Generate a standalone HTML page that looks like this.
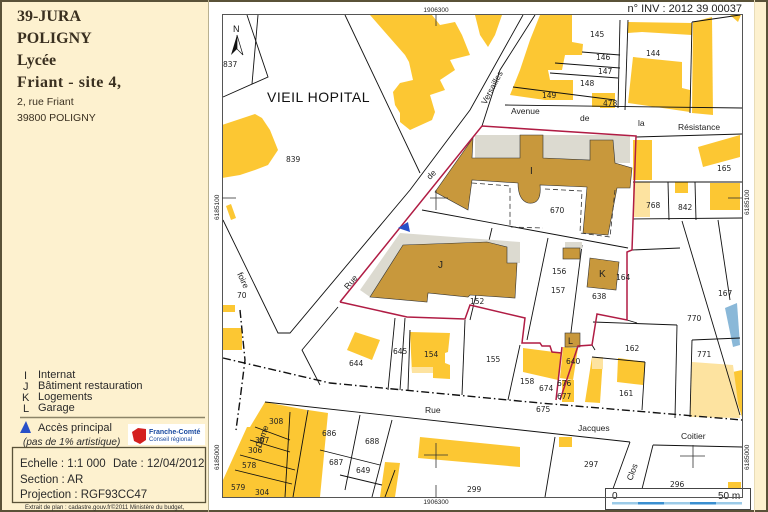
<!DOCTYPE html>
<html><head><meta charset="utf-8"><style>
body{margin:0;width:768px;height:512px;overflow:hidden;background:#fdf1cf;font-family:"Liberation Sans",sans-serif;}
.p{position:absolute;left:0;top:0}
</style></head><body>
<svg class="p" width="768" height="512" viewBox="0 0 768 512" font-family="Liberation Sans, sans-serif">
<rect x="0" y="0" width="768" height="512" fill="#fdf1cf"/>
<rect x="209" y="0" width="545" height="510" fill="#fff"/>
<rect x="1" y="1" width="766" height="510" fill="none" stroke="#5a5238" stroke-width="2"/>
<line x1="208.5" y1="0" x2="208.5" y2="512" stroke="#b8b090"/>
<line x1="754.5" y1="0" x2="754.5" y2="512" stroke="#e8dcb8"/>

<!-- left panel text -->
<g font-family="Liberation Serif, serif" font-weight="bold" font-size="16" fill="#3a3020">
<text x="17" y="21">39-JURA</text>
<text x="17" y="43">POLIGNY</text>
<text x="17" y="65">Lycée</text>
<text x="17" y="87" textLength="104">Friant - site 4,</text>
</g>
<text x="17" y="105" font-size="10.5" fill="#3a3020">2, rue Friant</text>
<text x="17" y="121" font-size="10.5" fill="#3a3020">39800 POLIGNY</text>
<g font-size="11" fill="#2a2a2a">
<text x="24" y="379">I</text><text x="38" y="378">Internat</text>
<text x="23" y="390">J</text><text x="38" y="389">Bâtiment restauration</text>
<text x="22" y="401">K</text><text x="38" y="400">Logements</text>
<text x="23" y="412">L</text><text x="38" y="411">Garage</text>
</g>
<line x1="20" y1="417.5" x2="205" y2="417.5" stroke="#8c8468" stroke-width="1.5"/>
<polygon points="20,433 26,421 31,433" fill="#2850c8"/>
<text x="38" y="431" font-size="11" fill="#2a2a2a">Accès principal</text>
<text x="23" y="445" font-size="10" font-style="italic" fill="#2a2a2a">(pas de 1% artistique)</text>
<rect x="128" y="424" width="77" height="21" fill="#fff"/>
<path d="M132,432 L138,428 L146,429 L146,440 L140,444 L134,441 Z" fill="#d42020"/>
<text x="149" y="434" font-size="7" font-weight="bold" fill="#1a4aa0">Franche-Comté</text>
<text x="149" y="441" font-size="6" fill="#1a4aa0">Conseil régional</text>
<rect x="12.5" y="447.5" width="193" height="55" fill="none" stroke="#5a5238" stroke-width="1.3"/>
<g font-size="11.5" fill="#2a2a2a">
<text x="20" y="467">Echelle : 1:1 000</text><text x="113" y="467">Date : 12/04/2012</text>
<text x="20" y="483">Section : AR</text>
<text x="20" y="498">Projection : RGF93CC47</text>
</g>
<text x="25" y="509" font-size="6" fill="#2a2a2a">Extrait de plan : cadastre.gouv.fr©2011 Ministère du budget,</text>

<!-- map -->
<text x="742" y="12" font-size="11" text-anchor="end" fill="#222">n° INV : 2012 39 00037</text>
<text x="436" y="12" font-size="6.5" text-anchor="middle" fill="#222">1906300</text>
<text x="436" y="504" font-size="6.5" text-anchor="middle" fill="#222">1906300</text>
<text transform="translate(219,220) rotate(-90)" font-size="6.5" fill="#222">6185100</text>
<text transform="translate(219,470) rotate(-90)" font-size="6.5" fill="#222">6185000</text>
<text transform="translate(749,215) rotate(-90)" font-size="6.5" fill="#222">6185100</text>
<text transform="translate(749,470) rotate(-90)" font-size="6.5" fill="#222">6185000</text>

<g fill="#fcc733">
<polygon points="370,15 432,15 440,25 455,22 462,35 470,55 450,60 455,70 440,80 445,90 430,95 435,112 432,120 410,130 400,122 400,113 395,105 393,92 400,83 413,80 409,62 405,55"/>
<polygon points="475,15 502,15 495,35 488,47 480,35"/>
<polygon points="222,125 237,120 255,114 262,118 270,130 278,150 268,165 255,170 240,175 222,178"/>
<polygon points="226,206 231,204 236,218 231,220"/>
<polygon points="540,15 572,15 572,42 583,44 582,55 565,55 562,70 548,70 550,80 573,80 573,100 545,100 510,95 520,70 530,40"/>
<rect x="592" y="93" width="8" height="14"/><rect x="600" y="93" width="15" height="15"/>
<polygon points="633,57 682,62 682,88 690,90 690,112 628,103"/>
<polygon points="628,22 692,23 692,35 642,32 628,33"/>
<polygon points="693,22 712,17 713,115 692,113"/>
<polygon points="730,15 741,15 738,22"/>
<polygon points="698,147 740,135 740,157 703,167"/>
<rect x="633" y="140" width="19" height="40"/>
<rect x="675" y="182" width="13" height="11"/>
<rect x="710" y="183" width="30" height="27"/>
<polygon points="250,427 265,402 307,410 303,497 223,497 223,480 247,427"/>
<polygon points="308,410 328,413 320,497 292,497"/>
<polygon points="410,332 450,333 448,352 445,353 445,363 450,365 450,379 433,378 433,373 412,373"/>
<polygon points="355,332 380,340 372,360 347,350"/>
<rect x="223" y="328" width="19" height="22"/>
<rect x="223" y="305" width="12" height="7"/>
<polygon points="420,437 520,447 520,467 418,458"/>
<polygon points="385,462 400,463 395,497 380,497"/>
<polygon points="523,348 562,353 558,380 523,372"/>
<polygon points="563,347 578,348 573,380 560,378"/>
<polygon points="592,357 603,357 600,403 585,402"/>
<polygon points="618,358 645,362 643,385 617,382"/>
<polygon points="728,373 742,370 742,417"/>
<rect x="559" y="437" width="13" height="10"/>
<rect x="728" y="482" width="13" height="6"/>
<rect x="562" y="380" width="12" height="22"/>
</g>
<g fill="#fde3a0">
<rect x="633" y="182" width="17" height="35"/>
<polygon points="692,362 733,365 740,418 690,417"/>
<rect x="412" y="367" width="21" height="6"/>
<rect x="592" y="357" width="11" height="12"/>
</g>
<polygon points="725,308 737,303 740,345 733,347" fill="#8ab8d8"/>

<!-- lines -->
<g fill="none" stroke="#111" stroke-width="0.9">
<line x1="345" y1="15" x2="420" y2="173"/>
<polyline points="247,15 268,77 223,97"/>
<line x1="258" y1="15" x2="252" y2="84"/>
<polyline points="523,15 470,110 410,190 290,333 278,333 223,220"/>
<polyline points="535,15 500,70 482,126"/>
<polyline points="338,307 302,350 320,385"/>
<line x1="505" y1="105" x2="742" y2="108"/>
<line x1="636" y1="137" x2="742" y2="134"/>
<line x1="582" y1="52" x2="620" y2="55"/><line x1="555" y1="63" x2="620" y2="68"/>
<line x1="550" y1="73" x2="618" y2="78"/><line x1="513" y1="87" x2="615" y2="100"/>
<line x1="620" y1="20" x2="618" y2="108"/><line x1="628" y1="20" x2="625" y2="110"/>
<line x1="692" y1="22" x2="690" y2="113"/><line x1="692" y1="22" x2="740" y2="15"/>
<line x1="633" y1="182" x2="742" y2="182"/><line x1="633" y1="219" x2="742" y2="218"/>
<line x1="668" y1="182" x2="669" y2="220"/><line x1="695" y1="182" x2="696" y2="220"/>
<line x1="422" y1="210" x2="628" y2="248"/>
<line x1="492" y1="228" x2="470" y2="320"/><line x1="548" y1="238" x2="527" y2="340"/>
<line x1="582" y1="245" x2="570" y2="340"/>
<line x1="627" y1="320" x2="637" y2="323"/><line x1="592" y1="345" x2="595" y2="350"/>
<line x1="593" y1="322" x2="677" y2="325"/><line x1="677" y1="325" x2="675" y2="418"/>
<line x1="592" y1="357" x2="645" y2="362"/><line x1="645" y1="362" x2="642" y2="410"/>
<line x1="692" y1="340" x2="740" y2="338"/><line x1="692" y1="340" x2="690" y2="417"/>
<line x1="682" y1="221" x2="740" y2="415"/><line x1="632" y1="250" x2="680" y2="248"/>
<line x1="718" y1="220" x2="730" y2="300"/>
<line x1="265" y1="402" x2="630" y2="442"/><line x1="653" y1="445" x2="742" y2="447"/>
<line x1="255" y1="427" x2="290" y2="440"/><line x1="250" y1="440" x2="290" y2="452"/>
<line x1="240" y1="455" x2="295" y2="470"/><line x1="235" y1="470" x2="292" y2="484"/>
<line x1="290" y1="412" x2="285" y2="497"/><line x1="308" y1="410" x2="293" y2="497"/>
<line x1="320" y1="450" x2="380" y2="465"/><line x1="360" y1="415" x2="345" y2="490"/>
<line x1="392" y1="420" x2="372" y2="497"/><line x1="340" y1="475" x2="382" y2="485"/>
<line x1="395" y1="470" x2="385" y2="497"/><line x1="630" y1="442" x2="610" y2="497"/>
<line x1="653" y1="445" x2="640" y2="497"/><line x1="555" y1="437" x2="545" y2="497"/>
<line x1="395" y1="318" x2="388" y2="390"/><line x1="405" y1="318" x2="400" y2="390"/>
<line x1="465" y1="320" x2="462" y2="395"/><line x1="520" y1="345" x2="508" y2="400"/>
<line x1="410" y1="330" x2="408" y2="390"/>
</g>
<g fill="none" stroke="#111" stroke-width="1.4" stroke-dasharray="8,3,1.5,3">
<polyline points="223,358 330,383 540,403 742,420"/>
<polyline points="240,310 245,360 240,400 236,430"/>
</g>

<!-- brown buildings -->
<rect x="475" y="135" width="155" height="28" fill="#dcdad0"/>
<polygon points="400,233 520,242 520,263 507,263 507,247 487,242 403,245 370,297 360,290" fill="#dcdad0"/>
<rect x="565" y="242" width="17" height="7" fill="#dcdad0"/>
<g fill="#c8983c" stroke="#333" stroke-width="0.6">
<path d="M473,138 L472,158 L520,158 L520,135 L543,135 L543,158 L590,160 L590,140 L613,140 L615,163 L632,168 L630,188 L617,188 L608,235 L583,233 L587,187 L540,185 Q542,205 528,203 Q518,200 518,183 L472,180 L468,210 L435,192 Z"/>
<polygon points="403,245 487,242 507,247 507,263 517,263 515,298 470,295 468,297 428,293 427,302 370,297"/>
<polygon points="590,258 619,262 616,290 587,287"/>
<rect x="563" y="248" width="17" height="11"/>
<rect x="565" y="333" width="15" height="14"/>
</g>
<g font-size="10" fill="#222">
<text x="530" y="174">I</text><text x="438" y="268">J</text>
<text x="599" y="277">K</text><text x="568" y="344" font-size="9">L</text>
</g>
<g fill="none" stroke="#333" stroke-width="0.8" stroke-dasharray="5,3">
<polyline points="472,183 510,186 510,227 543,228"/>
<polyline points="545,189 582,191 580,233 610,237 615,190"/>
</g>
<!-- red boundary -->
<g fill="none" stroke="#b01c44" stroke-width="1.5">
<polyline points="340,302 482,126 636,136 632,250 627,252 627,320 597,314 592,345 578,346 560,400"/>
<polyline points="340,302 407,317 465,319 470,305 525,318 522,343 540,343 542,346 550,346 552,352 562,353"/>
<line x1="562" y1="347" x2="556" y2="400"/>
</g>
<polygon points="398,228 408,222 410,232" fill="#2850c8"/>

<!-- scale -->
<rect x="605.5" y="488.5" width="145" height="21" fill="#fff" stroke="#444"/>
<text x="612" y="499" font-size="10" fill="#222">0</text>
<text x="718" y="499" font-size="10" fill="#222">50 m</text>
<rect x="612" y="502" width="130" height="2.5" fill="#9ccbe8"/>
<rect x="638" y="502" width="26" height="2.5" fill="#3a8fd0"/>
<rect x="690" y="502" width="26" height="2.5" fill="#3a8fd0"/>

<!-- north -->
<text x="233" y="32" font-size="9" fill="#111">N</text>
<polygon points="237,35 231,55 237,49" fill="#111"/>
<polygon points="237,35 243,55 237,49" fill="none" stroke="#111" stroke-width="0.7"/>

<rect x="222.5" y="14.5" width="520" height="483" fill="none" stroke="#555"/>

<!-- labels -->
<text x="267" y="102" font-size="14" fill="#111" letter-spacing="0.5">VIEIL  HOPITAL</text>
<g font-size="7.5" fill="#222" font-family="DejaVu Sans, sans-serif">
<text x="223" y="67">837</text><text x="286" y="162">839</text>
<text x="590" y="37">145</text><text x="596" y="60">146</text><text x="598" y="74">147</text>
<text x="580" y="86">148</text><text x="542" y="98">149</text><text x="603" y="106">478</text>
<text x="646" y="56">144</text><text x="717" y="171">165</text>
<text x="646" y="208">768</text><text x="678" y="210">842</text>
<text x="550" y="213">670</text><text x="552" y="274">156</text><text x="551" y="293">157</text>
<text x="592" y="299">638</text><text x="470" y="304">152</text>
<text x="616" y="280">164</text><text x="718" y="296">167</text><text x="687" y="321">770</text>
<text x="697" y="357">771</text><text x="625" y="351">162</text><text x="619" y="396">161</text>
<text x="566" y="364">640</text><text x="520" y="384">158</text><text x="539" y="391">674</text>
<text x="557" y="386">676</text><text x="557" y="399">677</text><text x="536" y="412">675</text>
<text x="486" y="362">155</text><text x="349" y="366">644</text><text x="393" y="354">645</text>
<text x="424" y="357">154</text><text x="237" y="298">70</text>
<text x="269" y="424">308</text><text x="255" y="443">307</text><text x="248" y="453">306</text>
<text x="242" y="468">578</text><text x="231" y="490">579</text><text x="255" y="495">304</text>
<text x="322" y="436">686</text><text x="365" y="444">688</text><text x="329" y="465">687</text>
<text x="356" y="473">649</text><text x="467" y="492">299</text><text x="584" y="467">297</text>
<text x="670" y="487">296</text>
</g>
<g font-size="8.5" fill="#222">
<text x="511" y="114">Avenue</text><text x="580" y="121">de</text><text x="638" y="126">la</text>
<text x="678" y="130">Résistance</text>
<text x="425" y="413">Rue</text><text x="578" y="431">Jacques</text><text x="681" y="439">Coitier</text>
<text transform="translate(486,105) rotate(-62)">Versailles</text>
<text transform="translate(430,180) rotate(-45)">de</text>
<text transform="translate(348,290) rotate(-50)">Rue</text>
<text transform="translate(237,274) rotate(65)">foire</text>
<text transform="translate(261,448) rotate(-70)">Dame</text>
<text transform="translate(632,481) rotate(-70)">Clos</text>
</g>
<g stroke="#333" stroke-width="0.8">
<line x1="436" y1="14" x2="436" y2="26"/><line x1="436" y1="485" x2="436" y2="497"/>
<line x1="424" y1="455" x2="448" y2="455"/><line x1="436" y1="443" x2="436" y2="468"/>
<line x1="430" y1="198" x2="448" y2="198"/><line x1="436" y1="190" x2="436" y2="210"/>
<line x1="680" y1="456" x2="705" y2="456"/><line x1="693" y1="445" x2="693" y2="468"/>
<line x1="222" y1="198" x2="236" y2="198"/><line x1="728" y1="198" x2="742" y2="198"/>
</g>
</svg>
</body></html>
